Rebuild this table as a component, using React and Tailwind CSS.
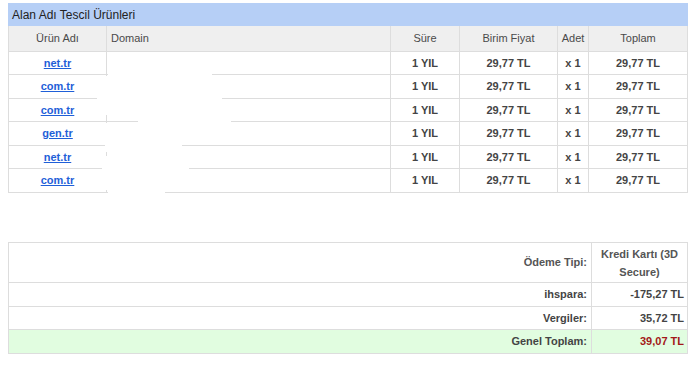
import React from "react";

const rows = ["net.tr", "com.tr", "com.tr", "gen.tr", "net.tr", "com.tr"];
const rowH = ["h-[23px]", "h-[24px]", "h-[23px]", "h-[24px]", "h-[23px]", "h-[24px]"];

const patches = [
  "left-[108px] top-[55px] w-[104px] h-[21px]",
  "left-[97px] top-[76px] w-[125px] h-[39px]",
  "left-[138px] top-[115px] w-[93px] h-[8px]",
  "left-[105px] top-[123px] w-[77px] h-[29px]",
  "left-[102px] top-[156px] w-[87px] h-[34px]",
  "left-[108px] top-[191px] w-[57px] h-[4px]",
];

export default function App() {
  return (
    <div
      className="relative w-[691px] h-[365px] bg-white text-[11px] text-[#444]"
      style={{ fontFamily: '"Liberation Sans", Arial, sans-serif' }}
    >
      <div className="pl-2 pt-[3px] w-[688px]">
        {/* top table */}
        <div className="w-[680px]">
          <div className="h-[23px] bg-[#b6cff6] flex items-center pl-[4px] text-[12px] text-[#222]">
            Alan Adı Tescil Ürünleri
          </div>
          <div className="flex h-[26px] bg-[#efefef] border-b border-[#dddddd] text-[#4a4a4a]">
            <div className="w-[98px] border-l border-[#dddddd] flex items-center justify-center">Ürün Adı</div>
            <div className="w-[284px] border-l border-[#dddddd] flex items-center pl-[4px]">Domain</div>
            <div className="w-[69px] border-l border-[#dddddd] flex items-center justify-center">Süre</div>
            <div className="w-[98px] border-l border-[#dddddd] flex items-center justify-center">Birim Fiyat</div>
            <div className="w-[31px] border-l border-[#dddddd] flex items-center justify-center">Adet</div>
            <div className="w-[100px] border-l border-r border-[#dddddd] flex items-center justify-center">Toplam</div>
          </div>
          {rows.map((r, i) => (
            <div key={i} className={`flex ${rowH[i]} border-b border-[#dddddd] font-bold`}>
              <div className="w-[98px] border-l border-[#dddddd] flex items-center justify-center">
                <a className="text-[#1f5fd8] underline">{r}</a>
              </div>
              <div className="w-[284px] border-l border-[#dddddd]"></div>
              <div className="w-[69px] border-l border-[#dddddd] flex items-center justify-center">1 YIL</div>
              <div className="w-[98px] border-l border-[#dddddd] flex items-center justify-center">29,77 TL</div>
              <div className="w-[31px] border-l border-[#dddddd] flex items-center justify-center">x 1</div>
              <div className="w-[100px] border-l border-r border-[#dddddd] flex items-center justify-center">29,77 TL</div>
            </div>
          ))}
        </div>

        {/* bottom table */}
        <div className="mt-[49px] w-[680px] border-t border-l border-r border-[#dddddd] font-bold">
          <div className="flex h-[40px] border-b border-[#dddddd] text-[#555]">
            <div className="flex-1 flex items-center justify-end pr-[4px]">Ödeme Tipi:</div>
            <div className="w-[96px] border-l border-[#dddddd] flex items-center justify-center text-center leading-[18px]">
              Kredi Kartı (3D
              <br />
              Secure)
            </div>
          </div>
          <div className="flex h-[24px] border-b border-[#dddddd]">
            <div className="flex-1 flex items-center justify-end pr-[4px]">ihspara:</div>
            <div className="w-[96px] border-l border-[#dddddd] flex items-center justify-end pr-[3px]">-175,27 TL</div>
          </div>
          <div className="flex h-[23px] border-b border-[#dddddd]">
            <div className="flex-1 flex items-center justify-end pr-[4px]">Vergiler:</div>
            <div className="w-[96px] border-l border-[#dddddd] flex items-center justify-end pr-[3px]">35,72 TL</div>
          </div>
          <div className="flex h-[24px] border-b border-[#dddddd] bg-[#e1fde0]">
            <div className="flex-1 flex items-center justify-end pr-[4px]">Genel Toplam:</div>
            <div className="w-[96px] border-l border-[#dddddd] flex items-center justify-end pr-[3px] text-[#a31818]">39,07 TL</div>
          </div>
        </div>
      </div>

      {patches.map((p, i) => (
        <div key={i} className={`absolute bg-white ${p}`} />
      ))}
    </div>
  );
}
